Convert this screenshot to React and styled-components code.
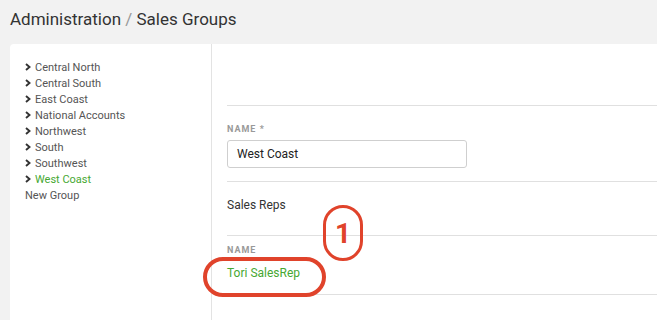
import React from "react";
import styled, { createGlobalStyle } from "styled-components";

const Global = createGlobalStyle`
  html, body { margin: 0; padding: 0; background: #f2f2f2; overflow: hidden; }
  body { font-family: Roboto, "Liberation Sans", sans-serif; }
`;

const Page = styled.div`
  width: 657px;
  height: 320px;
  display: flex;
  flex-direction: column;
`;

const Header = styled.h1`
  margin: 0;
  height: 44px;
  padding: 8px 0 0 10px;
  box-sizing: border-box;
  font-size: 17px;
  font-weight: 400;
  color: #333;
  line-height: 22px;
`;

const Slash = styled.span`
  color: #999;
`;

const Card = styled.div`
  flex: 1;
  margin-left: 10px;
  background: #fff;
  border-radius: 4px 0 0 0;
  display: grid;
  grid-template-columns: 202px 1fr;
  position: relative;
`;

const Sidebar = styled.ul`
  list-style: none;
  margin: 0;
  padding: 15px 0 0 15px;
  border-right: 1px solid #e3e3e3;
`;

const NavItem = styled.li`
  display: flex;
  align-items: center;
  height: 16px;
  font-size: 11px;
  color: ${(p) => (p.$active ? "#46a832" : "#555")};
`;

const Chevron = styled.svg`
  width: 6px;
  height: 8px;
  margin-right: 4px;
  flex: none;
`;

const Main = styled.div`
  padding-left: 15px;
  display: flex;
  flex-direction: column;
`;

const Section = styled.div`
  height: ${(p) => p.$h}px;
  box-sizing: border-box;
  border-bottom: 1px solid #e0e0e0;
  display: flex;
  flex-direction: column;
  padding-top: ${(p) => p.$pt || 0}px;
`;

const Label = styled.div`
  font-size: 9px;
  font-weight: 700;
  letter-spacing: 1px;
  color: #999;
  line-height: 12px;
`;

const Input = styled.div`
  margin-top: 5px;
  width: 240px;
  height: 28px;
  box-sizing: border-box;
  border: 1px solid #cfcfcf;
  border-radius: 3px;
  padding: 0 9px;
  display: flex;
  align-items: center;
  font-size: 12px;
  color: #222;
`;

const Heading = styled.div`
  font-size: 12px;
  line-height: 16px;
  color: #333;
`;

const RepLink = styled.div`
  margin-top: 10px;
  font-size: 12px;
  color: #46a832;
`;

const Marker = styled.div`
  position: absolute;
  box-sizing: border-box;
  border: 3.5px solid #e0432b;
  border-radius: 20px;
  display: flex;
  align-items: center;
  justify-content: center;
  color: #e0432b;
  font-weight: 700;
  font-size: 28px;
  pointer-events: none;
`;

const groups = [
  "Central North",
  "Central South",
  "East Coast",
  "National Accounts",
  "Northwest",
  "South",
  "Southwest",
  "West Coast",
];

const Chev = () => (
  <Chevron viewBox="0 0 6 8">
    <path d="M1 1 L4.5 4 L1 7" fill="none" stroke="#333" strokeWidth="1.9" />
  </Chevron>
);

export default function App() {
  return (
    <Page>
      <Global />
      <Header>
        Administration <Slash>/</Slash> Sales Groups
      </Header>
      <Card>
        <Sidebar>
          {groups.map((g) => (
            <NavItem key={g} $active={g === "West Coast"}>
              <Chev />
              {g}
            </NavItem>
          ))}
          <NavItem>New Group</NavItem>
        </Sidebar>
        <Main>
          <Section $h={62} />
          <Section $h={76} $pt={17}>
            <Label>NAME *</Label>
            <Input>West Coast</Input>
          </Section>
          <Section $h={54} $pt={15}>
            <Heading>Sales Reps</Heading>
          </Section>
          <Section $h={59} $pt={8}>
            <Label>NAME</Label>
            <RepLink>Tori SalesRep</RepLink>
          </Section>
        </Main>
        <Marker style={{ left: 313, top: 161, width: 40, height: 56 }}>1</Marker>
        <Marker style={{ left: 193, top: 213, width: 123, height: 40, borderWidth: 4 }} />
      </Card>
    </Page>
  );
}
